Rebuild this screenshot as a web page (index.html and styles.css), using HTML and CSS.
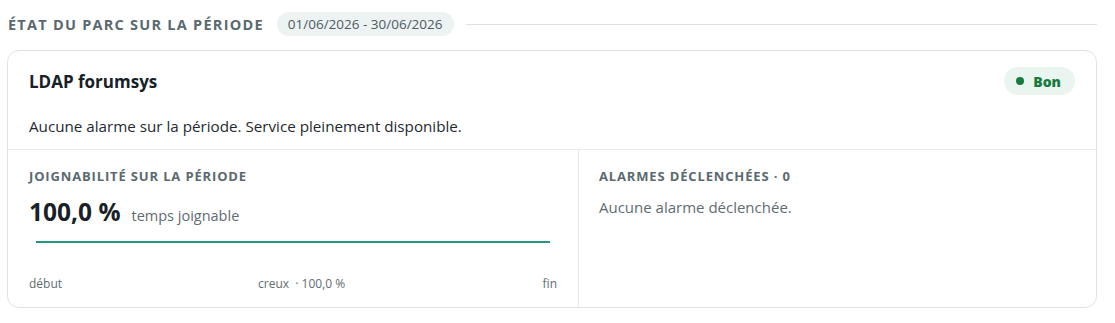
FILE: index.html
```html
<!DOCTYPE html>
<html lang="fr">
<head>
<meta charset="utf-8">
<title>État du parc</title>
<link rel="stylesheet" href="styles.css">
</head>
<body>
<section class="section">
  <header class="section-head">
    <h2 class="section-title">État du parc sur la période</h2>
    <span class="period">01/06/2026 - 30/06/2026</span>
    <span class="rule"></span>
  </header>
  <article class="card">
    <div class="card-top">
      <div class="card-row">
        <h3 class="card-title">LDAP forumsys</h3>
        <span class="badge"><span class="dot"></span>Bon</span>
      </div>
      <p class="card-desc">Aucune alarme sur la période. Service pleinement disponible.</p>
    </div>
    <div class="card-bottom">
      <div class="col col-left">
        <div class="label">Joignabilité sur la période</div>
        <div class="metric"><span class="value">100,0 %</span><span class="unit">temps joignable</span></div>
        <div class="chart"><div class="chart-line"></div></div>
        <div class="axis">
          <span>début</span>
          <span class="axis-mid">creux &nbsp;· 100,0 %</span>
          <span>fin</span>
        </div>
      </div>
      <div class="col col-right">
        <div class="label">Alarmes déclenchées · 0</div>
        <p class="muted">Aucune alarme déclenchée.</p>
      </div>
    </div>
  </article>
</section>
</body>
</html>
```

FILE: styles.css
```css
* { box-sizing: border-box; }
html, body { margin: 0; padding: 0; background: #ffffff; }
body {
  font-family: "Open Sans", "Noto Sans", sans-serif;
  color: #1d272c;
  padding: 12px 18px 0 7px;
}
.section-head {
  display: flex;
  align-items: center;
  height: 24px;
  padding-left: 1px;
}
.section-title {
  margin: 0;
  font-size: 14.5px;
  font-weight: 700;
  letter-spacing: 1.25px;
  text-transform: uppercase;
  color: #5a696e;
  white-space: nowrap;
}
.period {
  margin-left: 13px;
  height: 24px;
  line-height: 24px;
  padding: 0 11px;
  border-radius: 12px;
  background: #edf2f3;
  color: #4c5b61;
  font-size: 13.5px;
  white-space: nowrap;
}
.rule {
  flex: 1;
  height: 1px;
  margin-left: 12px;
  background: #dde3e5;
}
.card {
  margin-top: 14px;
  border: 1px solid #dfe3e5;
  border-radius: 12px;
  background: #fff;
}
.card-top {
  padding: 16px 21px 13px 21px;
  border-bottom: 1px solid #e6eaec;
}
.card-row {
  display: flex;
  align-items: center;
  justify-content: space-between;
  height: 28px;
}
.card-title {
  margin: 0;
  font-size: 17px;
  font-weight: 700;
  color: #172126;
}
.badge {
  display: inline-flex;
  align-items: center;
  height: 28px;
  padding: 0 14px 0 12px;
  border-radius: 14px;
  background: #e9f5ee;
  color: #187a3f;
  font-size: 14px;
  font-weight: 800;
}
.dot {
  width: 8px;
  height: 8px;
  border-radius: 50%;
  background: #187a3f;
  margin-right: 9px;
}
.card-desc {
  margin: 21px 0 0 0;
  font-size: 15.2px;
  line-height: 20px;
  color: #1f292e;
}
.card-bottom {
  display: grid;
  grid-template-columns: 571px 1fr;
}
.col { padding: 18px 21px 15px 21px; }
.col-right { padding-left: 20px; }
.col-left { border-right: 1px solid #e6eaec; }
.label {
  font-size: 13px;
  line-height: 17px;
  font-weight: 700;
  letter-spacing: 0.85px;
  text-transform: uppercase;
  color: #5a696e;
}
.metric {
  display: flex;
  align-items: baseline;
  margin-top: 12px;
  height: 30px;
}
.value {
  font-size: 24.5px;
  line-height: 30px;
  font-weight: 700;
  color: #172126;
}
.unit {
  margin-left: 11px;
  font-size: 14.5px;
  color: #5f6c71;
}
.chart {
  padding: 14px 7px 0 7px;
}
.chart-line {
  height: 2px;
  background: #2a9482;
}
.axis {
  display: flex;
  justify-content: space-between;
  margin-top: 33px;
  font-size: 12px;
  line-height: 16px;
  color: #5f6c71;
}
.axis-mid { margin-left: 196px; margin-right: auto; }
.muted {
  margin: 12px 0 0 0;
  font-size: 15px;
  line-height: 20px;
  color: #5f6c71;
}
```
